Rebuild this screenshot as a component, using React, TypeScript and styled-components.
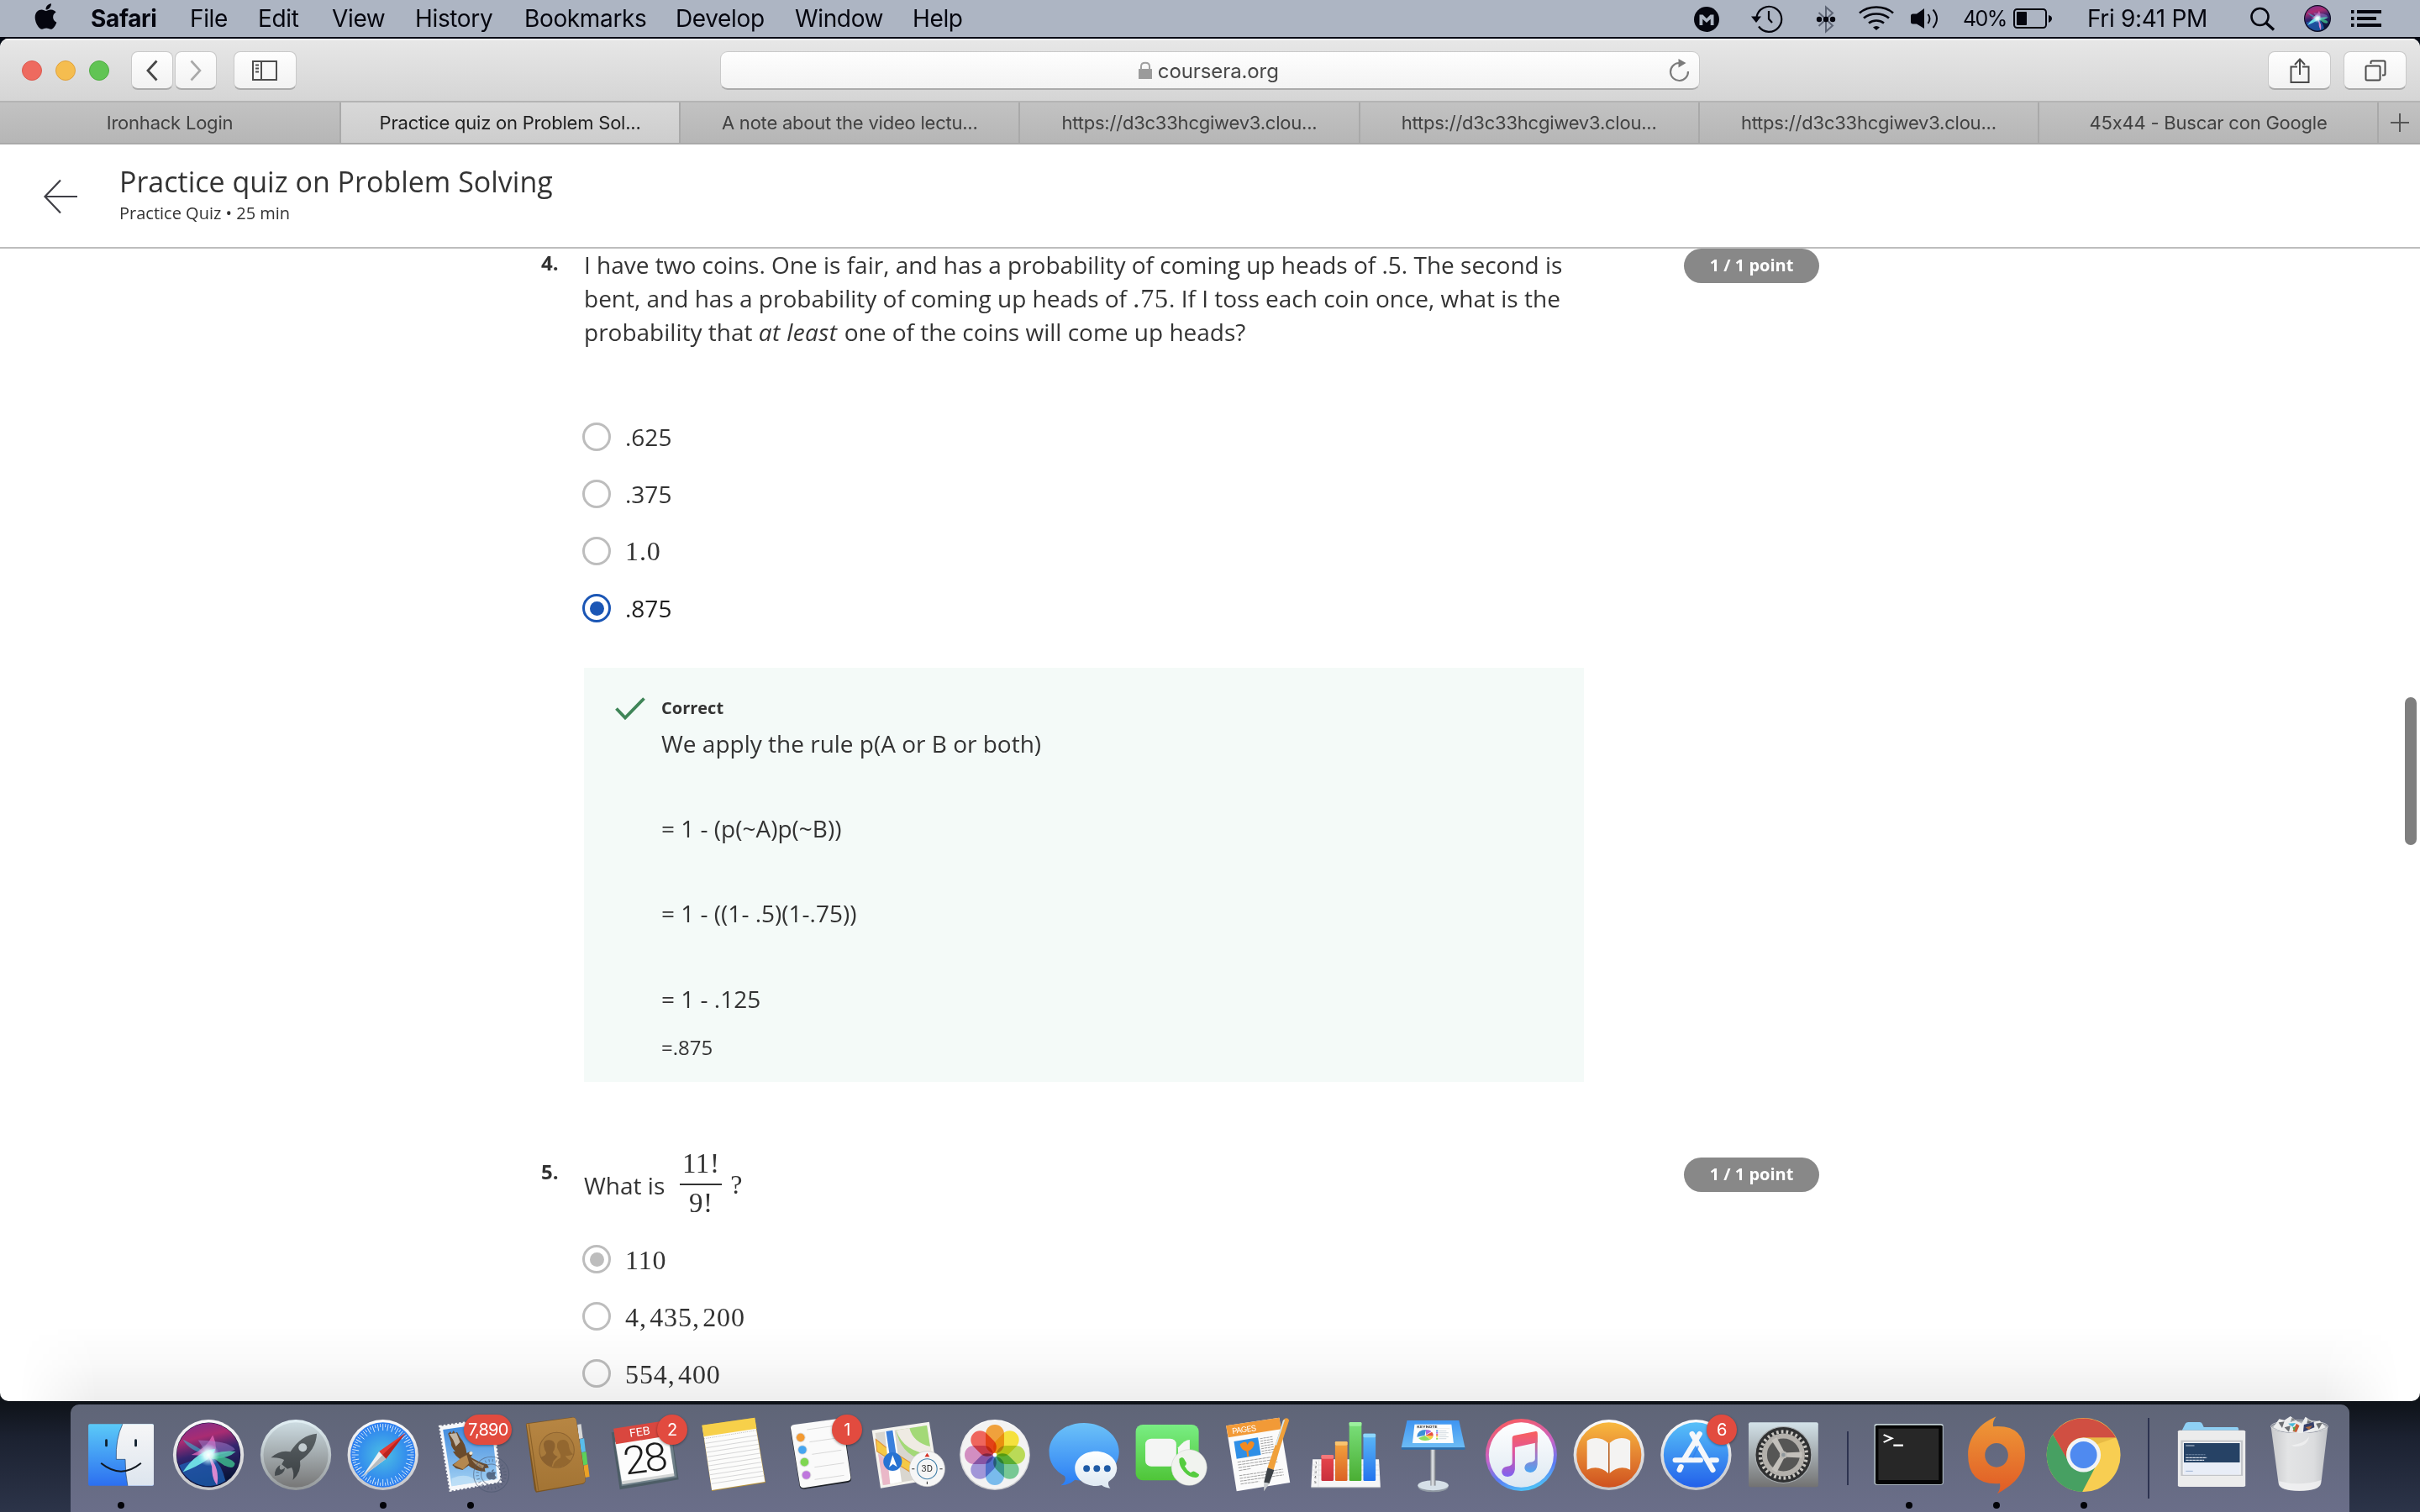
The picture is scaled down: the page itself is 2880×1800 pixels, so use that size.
import React from 'react';
import styled, { createGlobalStyle } from 'styled-components';
import { FaApple } from 'react-icons/fa';

const UI = `Inter, "Liberation Sans", sans-serif`;
const BODY = `"Open Sans", "Noto Sans", sans-serif`;
const MATH = `"Liberation Serif", serif`;

const Global = createGlobalStyle`
  * { box-sizing: border-box; }
  html, body { margin: 0; padding: 0; }
  body { width: 2880px; height: 1800px; overflow: hidden; background: #0b0f16; }
  svg { display: block; overflow: visible; }
`;

const Desktop = styled.div`
  display: flex;
  flex-direction: column;
  width: 2880px;
  height: 1800px;
  overflow: hidden;
  background: linear-gradient(to bottom, #030914 0, #030914 60px, #0e1218 1668px, #1b2130 1710px, #2c3449 1800px);
`;

/* ---------- menu bar ---------- */

const MenuBar = styled.header`
  display: flex;
  height: 44px;
  flex: none;
  margin-bottom: 2px;
  background: #adb5c3;
  color: #05060f;
  font: 400 28px/44px ${UI};
  letter-spacing: -0.35px;
  white-space: nowrap;
`;

const AppleMark = styled.div`
  width: 108px;
  padding: 2px 0 0 41px;
`;

const Menus = styled.nav`
  display: grid;
  grid-template-columns: 118px 81px 88px 99px 130px 180px 142px 140px 80px;
  width: 1908px;
`;

const MenuItem = styled.span<{ $strong?: boolean }>`
  font-weight: ${(p) => (p.$strong ? 700 : 400)};
`;

const Status = styled.div`
  display: grid;
  grid-template-columns: 68px 78px 50px 62px 62px 60px 88px 194px 64px 55px 40px;
  height: 44px;
`;

const Percent = styled.span`
  font-size: 25px;
  letter-spacing: -1.6px;
`;

/* ---------- browser chrome ---------- */

const Window = styled.section`
  position: relative;
  display: flex;
  flex-direction: column;
  flex: none;
  height: 1622px;
  border-radius: 10px;
  overflow: hidden;
  background: #fff;
`;

const Toolbar = styled.div`
  display: flex;
  flex: none;
  height: 74px;
  padding: 15px 16px 0 26px;
  background: linear-gradient(#e7e7e7, #d5d5d5);
  box-shadow: inset 0 2px 0 #f5f5f5;
`;

const Lights = styled.div`
  display: flex;
  gap: 16px;
  width: 130px;
  padding-top: 11px;
`;

const Light = styled.i<{ $fill: string; $edge: string }>`
  width: 24px;
  height: 24px;
  border-radius: 50%;
  background: ${(p) => p.$fill};
  border: 1px solid ${(p) => p.$edge};
`;

const ToolButton = styled.button<{ $w: number; $gap?: number }>`
  display: flex;
  align-items: center;
  justify-content: center;
  width: ${(p) => p.$w}px;
  height: 46px;
  margin: 0 ${(p) => p.$gap ?? 0}px 0 0;
  padding: 0;
  border: 1px solid #c9c9c9;
  border-bottom: 2px solid #acacac;
  border-radius: 8px;
  background: linear-gradient(#fefefe, #f2f2f2);
`;

const Address = styled.div`
  display: flex;
  align-items: center;
  width: 1167px;
  height: 46px;
  margin: 0 676px 0 504px;
  border: 1px solid #c9c9c9;
  border-bottom: 2px solid #acacac;
  border-radius: 9px;
  background: linear-gradient(#fefefe, #f3f3f3);
  color: #484848;
  font: 400 24px/40px ${UI};
`;

const Lock = styled.span`
  margin: 0 7px 0 497px;
`;

const Host = styled.span`
  width: 609px;
  padding-top: 3px;
  letter-spacing: -0.1px;
`;

const Tabs = styled.div`
  display: flex;
  flex: none;
  height: 52px;
  border-top: 2px solid #b4b4b4;
  border-bottom: 2px solid #a9a9a9;
  background: linear-gradient(#c2c2c2, #b6b6b6);
`;

const Tab = styled.div<{ $active?: boolean }>`
  flex: none;
  width: 404.2px;
  &:first-child {
    width: 406px;
  }
  border-right: 2px solid #a9a9a9;
  background: ${(p) => (p.$active ? 'linear-gradient(#d8d8d8, #cdcdcd)' : 'none')};
  color: ${(p) => (p.$active ? '#1f1f1f' : '#414141')};
  font: 400 22px/48px ${UI};
  letter-spacing: -0.22px;
  text-align: center;
  white-space: nowrap;
`;

const NewTab = styled.div`
  display: flex;
  flex: 1;
  align-items: center;
  justify-content: center;
`;

/* ---------- page ---------- */

const PageHeader = styled.header`
  display: flex;
  flex: none;
  height: 124px;
  padding-left: 52px;
  border-bottom: 2px solid #bdbdbd;
  background: #fff;
  color: #333;
  font-family: ${BODY};
`;

const BackArrow = styled.div`
  width: 90px;
  padding-top: 42px;
`;

const Heading = styled.div`
  padding-top: 22px;
`;

const Title = styled.h1`
  margin: 0;
  font-size: 34px;
  font-weight: 400;
  line-height: 44px;
`;

const Subtitle = styled.p`
  margin: 2px 0 0;
  font-size: 20px;
  line-height: 28px;
`;

const Page = styled.main`
  flex: 1;
  min-height: 0;
  overflow: hidden;
  padding-left: 644px;
  color: #333;
  font: 400 28px/40px ${BODY};
`;

const Question = styled.section`
  display: grid;
  grid-template-columns: 51px 1190px 161px;
  column-gap: 0;
  margin: -1px 0 90px;
`;

const Number = styled.div`
  font-size: 24px;
  font-weight: 700;
  line-height: 36px;
`;

const Points = styled.div`
  width: 161px;
  height: 41px;
  margin: 1px 0 0 119px;
  border-radius: 21px;
  background: #888;
  color: #fff;
  font-size: 20px;
  font-weight: 700;
  line-height: 40px;
  text-align: center;
`;

const Prompt = styled.p`
  margin: 0 -10px 88px 0;
  white-space: nowrap;
`;

const Emphasis = styled.em`
  letter-spacing: 0.4px;
  margin-right: 1px;
`;

const Inline = styled.span`
  font: 400 32px/36px ${MATH};
  letter-spacing: 0.9px;
  word-spacing: -5.5px;
`;

const FractionPrompt = styled.div`
  display: flex;
  align-items: flex-start;
  height: 105px;
  padding-top: 14px;
`;

const Fraction = styled.span`
  display: flex;
  flex-direction: column;
  width: 50px;
  margin: -21px 10px 0 18px;
  font: 400 33px/30px ${MATH};
  letter-spacing: 0.6px;
  text-align: center;
`;

const FractionRule = styled.i`
  height: 2px;
  margin: 9px 0 6px;
  background: #333;
`;

const Options = styled.div`
  display: flex;
  flex-direction: column;
  gap: 34px;
  margin-left: -2px;
`;

const Option = styled.label<{ $dark?: boolean }>`
  display: flex;
  align-items: center;
  gap: 17px;
  height: 34px;
  line-height: 34px;
  color: ${(p) => (p.$dark ? '#1f1f1f' : '#333')};
`;

const OptionMath = styled(Inline)`
  line-height: 35px;
  padding-top: 2px;
`;

const Radio = styled.span<{ $color: string; $on?: boolean }>`
  display: flex;
  flex: none;
  align-items: center;
  justify-content: center;
  width: 34px;
  height: 34px;
  border: 3.5px solid ${(p) => p.$color};
  border-radius: 50%;
  &::after {
    content: '';
    width: 17px;
    height: 17px;
    border-radius: 50%;
    background: ${(p) => (p.$on ? p.$color : 'transparent')};
  }
`;

const Feedback = styled.div`
  display: flex;
  height: 493px;
  margin-top: 54px;
  padding: 34px 0 0 37px;
  background: #f4faf8;
`;

const Check = styled.div`
  width: 55px;
  padding-top: 1px;
`;

const Verdict = styled.div`
  margin-bottom: 8px;
  font-size: 20px;
  font-weight: 700;
  line-height: 28px;
`;

const Step = styled.div<{ $last?: boolean }>`
  margin-bottom: ${(p) => (p.$last ? 20 : 61.2)}px;
  line-height: 40px;
`;

const Result = styled.div`
  font-size: 24px;
  line-height: 36px;
`;

const Scrollbar = styled.div`
  position: absolute;
  top: 784px;
  right: 4px;
  width: 14px;
  height: 176px;
  border-radius: 7px;
  background: #7f7f7f;
`;

const DockShade = styled.div`
  position: absolute;
  left: 0;
  right: 0;
  bottom: 0;
  height: 90px;
  background: linear-gradient(to bottom, rgba(0, 0, 0, 0), rgba(0, 0, 0, 0.025) 50%, rgba(0, 0, 0, 0.067));
  mask-image: linear-gradient(to right, transparent 0.8%, #000 4%, #000 96%, transparent 99.2%);
`;

/* ---------- dock ---------- */

const Dock = styled.footer`
  display: flex;
  flex: none;
  width: 2712px;
  height: 128px;
  margin: 4px 0 0 84px;
  padding-left: 8px;
  border-radius: 10px 10px 0 0;
  background: linear-gradient(#5f6577, #6a6e89);
`;

const DockItem = styled.div<{ $running?: boolean }>`
  position: relative;
  flex: none;
  width: 104.1px;
  height: 128px;
  &::after {
    content: '';
    display: ${(p) => (p.$running ? 'block' : 'none')};
    position: absolute;
    left: 48px;
    top: 116px;
    width: 8px;
    height: 8px;
    border-radius: 50%;
    background: #020308;
  }
`;

const Badge = styled.span`
  position: absolute;
  top: 12px;
  right: 3px;
  min-width: 36px;
  height: 36px;
  padding: 0 5px;
  border-radius: 18px;
  background: #e24b3f;
  box-shadow: 0 1px 3px rgba(0, 0, 0, 0.4);
  color: #fff;
  font: 400 20px/37px ${UI};
  letter-spacing: -0.8px;
  text-align: center;
`;

const Divider = styled.i<{ $w: number; $top: number; $h: number; $x: number }>`
  flex: none;
  width: ${(p) => p.$w}px;
  height: ${(p) => p.$h}px;
  margin-top: ${(p) => p.$top}px;
  background: linear-gradient(#2d3350, #2d3350) ${(p) => p.$x}px 0 / 2px 100% no-repeat;
`;

/* ---------- shared drawings ---------- */

const SiriOrb = () => (
  <g>
    <circle r="37.5" fill="#14133a" />
    <circle r="37" fill="url(#siriTop)" />
    <path d="M-34 12 A36 36 0 0 0 20 30 Q14 6 0 0Z" fill="#1f62b8" opacity=".75" />
    <path d="M-30 -18 Q-10 -8 0 0 Q-22 -4 -30 -18Z" fill="#31c3d8" opacity=".55" />
    <path d="M5 -23 Q12 -8 6 2 L-20 0 Q-2 -8 5 -23Z" fill="#f06cc0" opacity=".7" />
    <path d="M-12 -17 Q26 -16 31 -6 Q18 0 0 2Z" fill="#9f7fd0" opacity=".5" />
    <path d="M-30 20 Q-14 -4 8 -7 Q6 6 -30 20Z" fill="#7af4ee" opacity=".85" />
    <path d="M0 0 Q18 -6 32 -4 Q24 4 4 5Z" fill="#5ad6b8" opacity=".8" />
    <path d="M0 0 Q26 2 31 10 Q30 18 18 12Z" fill="#3fc28f" opacity=".8" />
    <path d="M0 0 Q14 16 10 35 Q4 28 4 14Z" fill="#f08fd6" opacity=".9" />
    <circle r="13" fill="url(#siriGlow)" />
  </g>
);

const Definitions = styled.svg`
  position: absolute;
`;

const SharedDefs = () => (
  <Definitions width="0" height="0">
    <defs>
      <linearGradient id="siriTop" x1="0" y1="0" x2=".25" y2="1">
        <stop offset="0" stopColor="#7a2f8f" />
        <stop offset=".3" stopColor="#a92c72" />
        <stop offset=".55" stopColor="#33256e" />
        <stop offset="1" stopColor="#0a1438" />
      </linearGradient>
      <radialGradient id="siriGlow">
        <stop offset="0" stopColor="#fff" />
        <stop offset=".4" stopColor="#e8ffff" stopOpacity=".85" />
        <stop offset="1" stopColor="#b0f0ff" stopOpacity="0" />
      </radialGradient>
      <linearGradient id="silver" x1="0" y1="0" x2="0" y2="1">
        <stop offset="0" stopColor="#fbfbfc" />
        <stop offset="1" stopColor="#c4c5c8" />
      </linearGradient>
      <linearGradient id="finderBlue" x1="0" y1="0" x2="0" y2="1">
        <stop offset="0" stopColor="#5bcaf8" />
        <stop offset="1" stopColor="#2c6ff0" />
      </linearGradient>
      <linearGradient id="finderWhite" x1="0" y1="0" x2="0" y2="1">
        <stop offset="0" stopColor="#f6f6f7" />
        <stop offset="1" stopColor="#dde5ee" />
      </linearGradient>
      <linearGradient id="launch" x1="0" y1="0" x2="0" y2="1">
        <stop offset="0" stopColor="#ccdbe1" />
        <stop offset="1" stopColor="#777777" />
      </linearGradient>
      <linearGradient id="launchRim" x1="0" y1="0" x2="0" y2="1">
        <stop offset="0" stopColor="#e3f1f6" />
        <stop offset="1" stopColor="#94989a" />
      </linearGradient>
      <linearGradient id="rocket" x1="0" y1="0" x2="0" y2="1">
        <stop offset="0" stopColor="#5b6266" />
        <stop offset="1" stopColor="#3a3f42" />
      </linearGradient>
      <radialGradient id="safari">
        <stop offset="0" stopColor="#4cc0e4" />
        <stop offset="1" stopColor="#2b7cf0" />
      </radialGradient>
      <linearGradient id="sky" x1="0" y1="0" x2="0" y2="1">
        <stop offset="0" stopColor="#3a86dc" />
        <stop offset="1" stopColor="#a5d3f4" />
      </linearGradient>
      <linearGradient id="leather" x1="0" y1="0" x2="0" y2="1">
        <stop offset="0" stopColor="#b78643" />
        <stop offset="1" stopColor="#a37434" />
      </linearGradient>
      <linearGradient id="bubble" x1="0" y1="0" x2="0" y2="1">
        <stop offset="0" stopColor="#6cc2f8" />
        <stop offset="1" stopColor="#2b7df4" />
      </linearGradient>
      <linearGradient id="paper" x1="0" y1="0" x2="0" y2="1">
        <stop offset="0" stopColor="#ffffff" />
        <stop offset="1" stopColor="#dde8f2" />
      </linearGradient>
      <linearGradient id="facetime" x1="0" y1="0" x2="0" y2="1">
        <stop offset="0" stopColor="#79ee83" />
        <stop offset="1" stopColor="#4fc538" />
      </linearGradient>
      <linearGradient id="keynote" x1="0" y1="0" x2="0" y2="1">
        <stop offset="0" stopColor="#3f95f2" />
        <stop offset="1" stopColor="#6cbcf5" />
      </linearGradient>
      <linearGradient id="pole" x1="0" y1="0" x2="1" y2="0">
        <stop offset="0" stopColor="#8c9096" />
        <stop offset=".45" stopColor="#e8ebee" />
        <stop offset="1" stopColor="#777b82" />
      </linearGradient>
      <linearGradient id="note" gradientUnits="userSpaceOnUse" x1="440" y1="132" x2="440" y2="296">
        <stop offset="0" stopColor="#f9605c" />
        <stop offset=".45" stopColor="#e0559c" />
        <stop offset="1" stopColor="#7a62f4" />
      </linearGradient>
      <linearGradient id="noteRight" gradientUnits="userSpaceOnUse" x1="490" y1="140" x2="480" y2="280">
        <stop offset="0" stopColor="#f9605c" />
        <stop offset=".5" stopColor="#a575c4" />
        <stop offset="1" stopColor="#4aa6f4" />
      </linearGradient>
      <linearGradient id="itunesRim" x1=".3" y1="0" x2=".6" y2="1">
        <stop offset="0" stopColor="#fa5b5e" />
        <stop offset=".45" stopColor="#c863c8" />
        <stop offset=".75" stopColor="#5b7cf6" />
        <stop offset="1" stopColor="#4cc6f6" />
      </linearGradient>
      <linearGradient id="books" x1="0" y1="0" x2="0" y2="1">
        <stop offset="0" stopColor="#f8b93f" />
        <stop offset=".5" stopColor="#e58432" />
        <stop offset="1" stopColor="#cf521f" />
      </linearGradient>
      <linearGradient id="store" x1="0" y1="0" x2="0" y2="1">
        <stop offset="0" stopColor="#57c0f8" />
        <stop offset="1" stopColor="#2361ea" />
      </linearGradient>
      <linearGradient id="prefs" x1="0" y1="0" x2="0" y2="1">
        <stop offset="0" stopColor="#d3e2e9" />
        <stop offset="1" stopColor="#727272" />
      </linearGradient>
      <linearGradient id="origin" x1="0" y1="0" x2="0" y2="1">
        <stop offset="0" stopColor="#ef9a38" />
        <stop offset="1" stopColor="#e05b25" />
      </linearGradient>
      <linearGradient id="bin" x1="0" y1="0" x2="1" y2="0">
        <stop offset="0" stopColor="#c9cacc" />
        <stop offset=".3" stopColor="#e3e4e5" />
        <stop offset=".75" stopColor="#dcdddf" />
        <stop offset="1" stopColor="#c0c2c6" />
      </linearGradient>
    </defs>
  </Definitions>
);

/* ---------- dock icons ---------- */

type IconDef = {
  name: string;
  cx: number;
  scale?: number;
  running?: boolean;
  badge?: string;
  art: React.ReactNode;
};

const range = (n: number) => Array.from({ length: n }, (_, i) => i);

const PetalGroup = styled.g`
  isolation: isolate;
  rect {
    mix-blend-mode: multiply;
  }
`;

const petals = ['#f09a2c', '#f5e02e', '#b5d84a', '#6cc48c', '#6fb6ec', '#9a8ed6', '#cf86bd', '#ef5a50'];

const appIcons: IconDef[] = [
  {
    name: 'Finder', cx: 235, running: true,
    art: (
      <>
        <rect x="126" y="106" width="218" height="220" rx="5" fill="url(#finderBlue)" />
        <path d="M240 106H339q5 0 5 5V321q0 5-5 5H257Q249 285 249 232H219Q216 160 240 106Z" fill="url(#finderWhite)" />
        <path d="M240 106Q216 160 219 232H249Q249 285 257 326" fill="none" stroke="#1c3f6e" strokeWidth="2" />
        <rect x="182" y="160" width="8" height="27" rx="4" fill="#10202e" />
        <rect x="280" y="160" width="8" height="27" rx="4" fill="#10202e" />
        <path d="M170 247Q235 303 300 247" fill="none" stroke="#111820" strokeWidth="6" strokeLinecap="round" />
      </>
    ),
  },
  {
    name: 'Siri', cx: 527,
    art: (
      <>
        <ellipse cx="527" cy="216" rx="118" ry="126" fill="url(#silver)" />
        <g transform="translate(527 216) scale(2.85 3.08)"><SiriOrb /></g>
      </>
    ),
  },
  {
    name: 'Launchpad', cx: 818,
    art: (
      <>
        <ellipse cx="818" cy="216" rx="118" ry="126" fill="url(#launchRim)" />
        <ellipse cx="818" cy="216" rx="108" ry="116" fill="url(#launch)" />
        <path d="M888 140Q835 145 800 205Q765 196 735 226Q762 224 779 234L771 250L790 266L804 261Q814 280 808 306Q838 276 832 237Q886 198 888 140Z" fill="url(#rocket)" />
        <ellipse cx="841" cy="190" rx="14" ry="15" fill="#c3ccd0" />
        <path d="M748 291Q746 264 766 252Q760 268 770 269Q777 268 782 262Q780 288 748 291Z" fill="#454b4f" />
      </>
    ),
  },
  {
    name: 'Safari', cx: 1110, running: true,
    art: (
      <>
        <ellipse cx="1109" cy="216" rx="118" ry="126" fill="url(#silver)" />
        <ellipse cx="1109" cy="216" rx="108" ry="116" fill="url(#safari)" />
        <g transform="translate(1109 216) scale(2.8 3)">
          {range(72).map((i) => (
            <line key={i} x1="0" x2="0" y1="-37" y2={i % 2 ? -33 : -29} transform={`rotate(${i * 5})`} stroke="#d9ecfb" strokeWidth=".9" />
          ))}
        </g>
        <path d="M1184 138L1096 204L1119 230Z" fill="#e23a34" />
        <path d="M1184 138L1107 217L1119 230Z" fill="#b9231f" />
        <path d="M1040 294L1096 204L1119 230Z" fill="#eef0f1" />
        <path d="M1040 294L1107 217L1119 230Z" fill="#b6bbbf" />
      </>
    ),
  },
  {
    name: 'Mail', cx: 1401, running: true, badge: '7,890',
    art: (
      <>
        <path d="M1298 114L1474 86L1501 312L1333 344Z" fill="#f7f8fa" stroke="#f7f8fa" strokeWidth="7" strokeDasharray="7 6" />
        <path d="M1309 126L1470 101L1490 302L1338 328Z" fill="url(#sky)" />
        <path d="M1338 300Q1380 280 1410 300T1488 285L1490 302L1338 328Z" fill="#cfe7f8" opacity=".6" />
        <path d="M1326 140L1334 132L1338 140L1344 129L1350 139L1356 134L1366 154Q1384 176 1388 210L1400 203L1408 212L1402 224Q1424 240 1456 250L1462 262L1448 264L1450 276Q1412 272 1394 254L1374 270L1352 264L1340 252L1366 232Q1352 222 1342 204L1350 204Q1334 186 1336 172Z" fill="#6b4b2c" />
        <path d="M1330 142L1354 138L1366 170L1352 186Q1344 160 1330 142Z" fill="#d9d2c6" opacity=".8" />
        <path d="M1404 232Q1424 246 1446 254L1442 264Q1418 258 1404 232Z" fill="#c9b79a" opacity=".6" />
        <path d="M1368 228L1388 216L1396 246L1376 268L1344 252Z" fill="#b48850" />
        <ellipse cx="1402" cy="210" rx="6" ry="6" fill="#f0e6d0" />
        <g fill="none" stroke="#4b566e" opacity=".58">
          <ellipse cx="1470" cy="286" rx="59" ry="63" strokeWidth="3" />
          <ellipse cx="1470" cy="286" rx="34" ry="37" strokeWidth="3" />
          <ellipse cx="1470" cy="286" rx="46" ry="50" strokeWidth="10" strokeDasharray="3 9" />
        </g>
        <g transform="translate(1453 265) scale(.09 .082)" fill="#3f4b63" opacity=".75">
          <path d="M318.700 268.700c-.2-36.700 16.400-64.400 50-84.800-18.800-26.900-47.200-41.700-84.700-44.600-35.500-2.800-74.300 20.700-88.500 20.700-15 0-49.400-19.700-76.400-19.700C63.300 141.200 4 184.800 4 273.500q0 39.300 14.400 81.200c12.800 36.700 59 126.700 107.200 125.200 25.200-.6 43-17.900 75.800-17.900 31.800 0 48.300 17.900 76.400 17.900 48.600-.7 90.400-82.500 102.600-119.300-65.200-30.700-61.700-90-61.700-91.900zm-56.600-164.200c27.300-32.400 24.800-61.900 24-72.500-24.100 1.400-52 16.400-67.900 34.900-17.500 19.800-27.800 44.300-25.600 71.900 26.100 2 49.900-11.400 69.500-34.300z" />
        </g>
      </>
    ),
  },
  {
    name: 'Contacts', cx: 181,
    art: (
      <>
        <path d="M246 108L258 106L264 156L250 160Z" fill="#d6d8d8" />
        <path d="M254 160L268 157L273 204L256 208Z" fill="#59bdea" />
        <path d="M260 208L275 205L280 250L262 254Z" fill="#5cd15a" />
        <path d="M266 254L281 250L286 294L268 298Z" fill="#eba226" />
        <path d="M74 108Q74 104 80 103L228 82Q240 80 242 94L273 304Q274 316 264 320L108 350Q103 344 102 336Z" fill="#7a5422" />
        <path d="M76 106L228 83Q240 81 242 94L272 304Q273 315 262 318L110 346Z" fill="url(#leather)" />
        <path d="M84 106L116 344" stroke="#8a6028" strokeWidth="3" fill="none" />
        <ellipse cx="177" cy="199" rx="58" ry="63" fill="#a97b3c" stroke="#8d6330" strokeWidth="3" />
        <path d="M134 186Q130 164 150 163Q172 164 171 186Q170 198 164 206Q166 216 180 222L166 238L160 258Q134 250 122 224Q142 220 142 208Q136 200 134 186Z" fill="#8b612f" />
        <path d="M178 190Q174 164 198 162Q216 162 218 188Q220 204 232 214Q216 222 206 218Q208 228 224 236Q206 262 164 260Q166 238 190 226Q192 216 186 208Z" fill="#93672f" />
      </>
    ),
  },
  {
    name: 'Calendar', cx: 472, badge: '2',
    art: (
      <>
        <path d="M356 136L552 108L580 304L384 340Z" fill="#4d5d66" />
        <path d="M366 140L552 112L574 296L390 328Z" fill="#6f8089" />
        <path d="M368 170L546 146L566 292L392 322Z" fill="#d4d6d6" />
        <path d="M371 174L544 148L564 282L391 310Z" fill="#fcfcfc" />
        <path d="M363 122L536 94L545 148L371 178Z" fill="#d9473f" />
        <text transform="translate(418 152) rotate(-8)" fill="#fff" fontFamily="Roboto, sans-serif" fontSize="40">FEB</text>
        <text transform="translate(403 287) rotate(-8)" fill="#1c1c1c" fontFamily="Roboto, sans-serif" fontWeight="300" fontSize="140" letterSpacing="-8">28</text>
      </>
    ),
  },
  {
    name: 'Notes', cx: 763.5,
    art: (
      <>
        <path d="M658 110L834 83L870 315L691 345Z" fill="#b5913a" />
        <path d="M659 112L833 86L868 312L691 342Z" fill="#fcfcfb" />
        <path d="M658 110L834 83L840 122L664 151Z" fill="#f7d04a" />
        <path d="M666 158L841 128" stroke="#8d8d8d" strokeWidth="2" strokeDasharray="2 3" />
        {range(10).map((i) => (
          <path key={i} d={`M${669 + i * 2.3} ${175 + i * 16}L${842 + i * 2.6} ${146 + i * 16}`} stroke="#c4c4c6" strokeWidth="2" />
        ))}
      </>
    ),
  },
  {
    name: 'Reminders', cx: 1055, badge: '1',
    art: (
      <>
        <path d="M953 124Q952 110 966 110L1112 88Q1126 86 1130 98L1156 300Q1156 312 1146 314L998 338Q986 338 984 328Z" fill="#1c2026" />
        <path d="M954 120Q954 110 966 108L1112 87Q1124 86 1127 98L1154 296Q1154 307 1144 309L998 334Q988 335 985 325Z" fill="#fafafa" />
        {[['#f39a33', 987, 154], ['#46a5f0', 993, 198], ['#7fd651', 1000, 242], ['#bf77dd', 1006, 288]].map(([c, x, y], i) => (
          <g key={i}>
            <ellipse cx={x} cy={y} rx="16.500" ry="17.500" fill="#dcdcdc" />
            <ellipse cx={x} cy={y} rx="13.500" ry="14.500" fill={c as string} />
            <path d={`M${1008 + i * 8.500} ${(y as number) - 28}l98 -15`} stroke="#c9c9c9" strokeWidth="2" />
          </g>
        ))}
        <path d="M1034 304l98 -15" stroke="#c9c9c9" strokeWidth="2" />
      </>
    ),
  },
  {
    name: 'Maps', cx: 1346.5,
    art: (
      <>
        <path d="M1225 128L1416 98L1446 300L1254 335Z" fill="#f4f3ee" />
        <path d="M1236 138L1408 111L1434 294L1262 324Z" fill="#d9d6cf" />
        <path d="M1306 128L1408 111L1430 262L1390 232Q1320 210 1306 128Z" fill="#a3d977" />
        <path d="M1306 128L1350 120Q1362 172 1420 186L1424 214Q1330 206 1306 128Z" fill="#efebe3" />
        <path d="M1238 160L1268 186L1380 262L1360 282L1242 204Z" fill="#f5c945" stroke="#e0943c" strokeWidth="3" />
        <path d="M1246 212L1276 236L1286 320L1262 324Z" fill="#eab8c8" />
        <path d="M1268 132L1300 127L1324 312L1286 320Z" fill="#fff" />
        <path d="M1272 132L1294 128L1306 214L1284 218Z" fill="#3a7fdc" />
        <ellipse cx="1294" cy="240" rx="31" ry="33" fill="#2873d3" />
        <path d="M1294 217L1309 259L1295 249L1282 260Z" fill="#fff" />
        <ellipse cx="1409" cy="266" rx="59" ry="63" fill="#f6f6f6" stroke="#c8c8c8" strokeWidth="2" />
        <ellipse cx="1409" cy="266" rx="33" ry="36" fill="none" stroke="#3f7ea8" strokeWidth="3" />
        <path d="M1409 209L1417 223H1401Z" fill="#d63022" />
        <path d="M1409 311v10M1358 266h9M1451 266h9" stroke="#333" strokeWidth="3" />
        <text x="1409" y="277" textAnchor="middle" fill="#333" fontFamily="Roboto, sans-serif" fontSize="31">3D</text>
      </>
    ),
  },
  {
    name: 'Photos', cx: 154,
    art: (
      <>
        <ellipse cx="151" cy="216" rx="117" ry="126" fill="url(#silver)" />
        <ellipse cx="151" cy="216" rx="113" ry="122" fill="#f3f3f3" />
        <PetalGroup transform="translate(151 216) scale(2.8 3)">
          {petals.map((c, i) => (
            <rect key={c} x="-11" y="-36" width="22" height="34" rx="11" fill={c} fillOpacity=".92" transform={`rotate(${i * 45})`} />
          ))}
          <circle r="2.200" fill="#fff" />
        </PetalGroup>
      </>
    ),
  },
  {
    name: 'Messages', cx: 445.5,
    art: (
      <>
        <path d="M448 102C513 102 565 148 565 205S513 308 448 308Q432 308 418 305Q400 323 371 325Q392 310 384 292Q332 262 332 205C332 148 383 102 448 102Z" fill="url(#bubble)" />
        <path d="M488 203C527 203 558 230 558 264Q558 292 530 312Q527 325 536 335Q518 334 507 324Q497 327 488 327C449 327 418 299 418 264S449 203 488 203Z" fill="url(#paper)" />
        <ellipse cx="457" cy="265" rx="11" ry="12" fill="#1e5aa6" />
        <ellipse cx="491" cy="265" rx="11" ry="12" fill="#1e5aa6" />
        <ellipse cx="526" cy="265" rx="11" ry="12" fill="#1e5aa6" />
      </>
    ),
  },
  {
    name: 'FaceTime', cx: 737,
    art: (
      <>
        <rect x="621" y="108" width="210" height="199" rx="24" fill="url(#facetime)" />
        <path d="M762 190Q784 162 801 162V250L762 230Z" fill="#f4f5f4" />
        <rect x="653" y="158" width="103" height="99" rx="20" fill="#f4f5f4" />
        <ellipse cx="799" cy="261" rx="59" ry="64" fill="#f1f3ef" stroke="#c9cec6" strokeWidth="1.500" />
        <path d="M766 230Q776 220 782 230L790 245Q790 252 784 256Q790 270 804 280Q812 272 818 276L832 286Q832 296 822 297Q800 298 782 276Q764 254 766 230Z" fill="#55cc3f" />
      </>
    ),
  },
  {
    name: 'Pages', cx: 1028,
    art: (
      <>
        <path d="M922 112L1099 83L1135 315L957 346Z" fill="#fbfbfb" />
        <path d="M922 112L1099 83L1106 124L929 154Z" fill="#f29a37" />
        <text transform="translate(943 141) rotate(-8)" fill="#fff" fontFamily="Inter, sans-serif" fontSize="28" letterSpacing="-2">PAGES</text>
        <path d="M948 168L1028 154L1038 216L957 230Z" fill="#2f8fe6" />
        <path d="M968 178Q990 160 992 180Q1004 158 1016 174Q1014 194 996 202L998 222L992 222L990 203Q970 198 968 178Z" fill="#f28a22" />
        {range(7).map((i) => (
          <path key={i} d={`M${1035 + i} ${158 + i * 9}l42 -7`} stroke="#a2a2a2" strokeWidth="3" strokeDasharray="9 2" />
        ))}
        {range(4).map((i) => (
          <path key={i} d={`M${960 + i * 1.500} ${242 + i * 10}l${130 - (i === 3 ? 90 : 0)} ${i === 3 ? -7 : -21}`} stroke="#a2a2a2" strokeWidth="3" strokeDasharray="12 2" />
        ))}
        {range(4).map((i) => (
          <path key={i} d={`M${966 + i * 1.500} ${290 + i * 10}l${145 - (i === 3 ? 84 : 0)} ${i === 3 ? -9 : -23}`} stroke="#a2a2a2" strokeWidth="3" strokeDasharray="10 2" />
        ))}
        <path d="M1112 92Q1124 78 1132 92L1102 190L1080 270L1060 262L1086 180Z" fill="#f0a03a" />
        <path d="M1112 92L1118 90L1090 182L1086 180Z" fill="#cfe6f4" />
        <path d="M1060 262L1082 270L1066 318L1048 314Z" fill="#3c4146" />
        <path d="M1048 314L1066 318L1048 346Z" fill="#c9cdd0" />
      </>
    ),
  },
  {
    name: 'Numbers', cx: 1320,
    art: (
      <>
        <path d="M1211 232H1432L1437 330H1206Z" fill="#f6f6f7" />
        <path d="M1206 330H1437V334H1206Z" fill="#b9bbc2" />
        <path d="M1232 232L1230 330M1210 252H1433M1209 270H1434M1208 288H1435" stroke="#d5d6d9" strokeWidth="1.500" />
        {['1', '2', '3', '4', '5'].map((t, i) => (
          <text key={t} x={1222 - i * 0.5} y={248 + i * 17.500} textAnchor="middle" fill="#333" fontFamily="Inter, sans-serif" fontSize="12">{t}</text>
        ))}
        {([['#c9303c', '#e8474d', '#f4787a', 1240, 216], ['#dc6224', '#f2a53f', '#f8c470', 1286, 168], ['#4aae33', '#7be07c', '#9cf09e', 1333, 99], ['#2373ee', '#5dbaf6', '#8ed6fa', 1380, 140]] as [string, string, string, number, number][]).map(([a, b, c, x, y], i) => (
          <g key={i}>
            <linearGradient id={`bar${i}`} x1="0" y1="0" x2="0" y2="1"><stop offset="0" stopColor={b} /><stop offset="1" stopColor={a} /></linearGradient>
            <rect x={x} y={y} width="41" height={309 - y} rx="4" fill={`url(#bar${i})`} />
            <rect x={x} y={y} width="41" height="14" rx="4" fill={c} />
          </g>
        ))}
      </>
    ),
  },
  {
    name: 'Keynote', cx: 155.5,
    art: (
      <>
        <ellipse cx="157" cy="329" rx="51" ry="20" fill="#8f98a3" />
        <ellipse cx="157" cy="325" rx="51" ry="18" fill="#d6e0e8" />
        <rect x="148" y="192" width="17" height="134" fill="url(#pole)" />
        <path d="M70 93H243L263 190H51Z" fill="url(#keynote)" />
        <path d="M51 190H263V197H52Z" fill="#2b6fae" />
        <path d="M95 107H218L225 174H88Z" fill="#fdfdfd" />
        <text x="103" y="119" fill="#333" fontFamily="Inter, sans-serif" fontWeight="700" fontSize="11" textLength="68" lengthAdjust="spacingAndGlyphs">KEYNOTE</text>
        <path d="M102 122H212" stroke="#ccc" strokeWidth="1" />
        <path d="M129 146L103 152Q104 126 133 126Z" fill="#3c8fd8" />
        <path d="M133 144V126Q146 126 151 133Z" fill="#b06ae0" />
        <path d="M131 147L153 134Q159 140 157 149Z" fill="#e8503f" />
        <path d="M131 147L157 149Q156 158 148 161Z" fill="#f6d53c" />
        <path d="M129 147L108 156Q116 166 132 165Q144 164 148 161Z" fill="#8edc62" />
        {['#3c8fd8', '#b06ae0', '#e8503f', '#f6d53c', '#8edc62'].map((c, i) => (
          <g key={c}>
            <rect x="167" y={128 + i * 7} width="6" height="5" fill={c} />
            <rect x="176" y={129 + i * 7} width={i % 2 ? 32 : 25} height="2.500" fill="#c9d3da" />
          </g>
        ))}
      </>
    ),
  },
  {
    name: 'iTunes', cx: 447,
    art: (
      <>
        <ellipse cx="448" cy="216" rx="119" ry="129" fill="url(#itunesRim)" />
        <ellipse cx="448" cy="216" rx="108" ry="116" fill="url(#paper)" />
        <path d="M418 155Q418 149 424 147L496 132Q502 131 502 137V172L427 189V268Q424 293 403 294Q383 293 383 276Q384 260 401 257Q418 256 418 244Z" fill="url(#note)" />
        <path d="M502 137V250Q500 278 478 279Q459 277 459 262Q460 246 476 242Q494 241 494 230V174Z" fill="url(#noteRight)" />
      </>
    ),
  },
  {
    name: 'Books', cx: 738,
    art: (
      <>
        <ellipse cx="740" cy="216" rx="118" ry="126" fill="url(#silver)" />
        <ellipse cx="740" cy="216" rx="108" ry="116" fill="url(#books)" />
        <path d="M738 174Q720 156 698 156Q680 156 667 166V269Q706 250 738 282Z" fill="#f4f3f2" />
        <path d="M742 174Q760 156 782 156Q799 156 811 166V269Q774 250 742 282Z" fill="#f4f3f2" />
        <path d="M740 174V282" stroke="#a85420" strokeWidth="3" />
      </>
    ),
  },
  {
    name: 'App Store', cx: 1030, badge: '6',
    art: (
      <>
        <ellipse cx="1031" cy="216" rx="118" ry="126" fill="url(#silver)" />
        <ellipse cx="1031" cy="216" rx="108" ry="116" fill="url(#store)" />
        <g stroke="#f5f7fa" strokeWidth="18" strokeLinecap="round" fill="none">
          <path d="M1018 141L1087 270" />
          <path d="M1043 141L990 234" />
          <path d="M962 235H1046M1082 235H1099" />
          <path d="M981 258L976 270" />
        </g>
        <path d="M1039 184L1020 226" stroke="#2f7df0" strokeWidth="5" opacity=".7" />
      </>
    ),
  },
  {
    name: 'System Preferences', cx: 1321,
    art: (
      <>
        <rect x="1206" y="100" width="232" height="231" rx="6" fill="url(#prefs)" />
        <g transform="translate(1322 216) scale(2.8 3)">
          <circle r="33.500" fill="#303132" stroke="#a8adb0" strokeWidth="1.200" />
          <circle r="26.500" fill="none" stroke="#c9c7c2" strokeWidth="4" strokeDasharray="2.600 2.950" transform="scale(1.040)" />
          <circle r="22.500" fill="#565655" stroke="#b3b0ab" strokeWidth="6" />
          {[0, 120, 240].map((a) => (
            <path key={a} d="M0 -2.500L22 -3.500V3.500L0 2.500Z" fill="#c3c0bb" transform={`rotate(${a})`} />
          ))}
          <circle r="4.500" fill="#b8b6b2" />
          <circle r="2.300" fill="#8f979c" />
        </g>
      </>
    ),
  },
];

const utilityIcons: IconDef[] = [
  {
    name: 'Terminal', cx: 207, scale: 2.24, running: true,
    art: (
      <>
        <rect x="114" y="105" width="184" height="218" rx="7" fill="#c2d0d4" />
        <rect x="117" y="110" width="179" height="211" rx="5" fill="#050505" />
        <rect x="125" y="122" width="161" height="184" fill="#272727" />
        <path d="M139 144L161 157L139 171" fill="none" stroke="#fff" strokeWidth="6" />
        <path d="M165 182H191" stroke="#fff" strokeWidth="7" />
      </>
    ),
  },
  {
    name: 'Origin', cx: 440, scale: 2.24, running: true,
    art: (
      <path
        fillRule="evenodd"
        d="M439 79Q428 98 431 115Q516 106 516 216C516 290 484 322 442 355Q452 336 449 318Q364 326 364 216C364 150 396 104 439 79ZM440 174C423 174 409 193 409 217S423 260 440 260S471 241 471 217S457 174 440 174Z"
        fill="url(#origin)"
      />
    ),
  },
  {
    name: 'Chrome', cx: 673, scale: 2.24, running: true,
    art: (
      <g transform="translate(672 216) scale(2.240 3)">
        <circle r="44" fill="#f8ce52" />
        <path d="M-36.500 -24.500A44 44 0 0 1 38.500 -20.500H0A20 20 0 0 0 -18 9Z" fill="#d04f42" />
        <path d="M-36.500 -24.500A44 44 0 0 0 -1.500 44L14 14.500Q0 26 -18 8Z" fill="#47a062" />
        <path d="M0 -20.500H38.500L14 -12Z" fill="#dba93a" opacity=".55" />
        <circle r="20.500" fill="#f1f3f6" />
        <circle r="16" fill="#4f8af0" />
      </g>
    ),
  },
];

const placeIcons: IconDef[] = [
  {
    name: 'Documents', cx: 1012, scale: 2.24,
    art: (
      <>
        <path d="M933 128L942 104Q944 99 950 99H980Q985 99 987 105L991 117H1080Q1084 117 1084 128Z" fill="#8fd0f5" />
        <rect x="922" y="128" width="180" height="202" rx="5" fill="#ececec" />
        <rect x="930" y="164" width="165" height="127" fill="#c3c5c9" />
        <rect x="935" y="170" width="155" height="117" fill="#f3f4f7" />
        <rect x="938" y="174" width="149" height="69" fill="#264265" />
        <rect x="938" y="244" width="149" height="42" fill="#e8edf7" />
        <path d="M943 183H966" stroke="#c3cfdd" strokeWidth="3" />
        <path d="M943 215H995" stroke="#6f86a3" strokeWidth="3" strokeDasharray="7 1" />
        <path d="M943 226H999M943 235H992" stroke="#d5dde8" strokeWidth="4" strokeDasharray="8 1" />
        <path d="M943 274H962" stroke="#9db2d2" strokeWidth="3" />
      </>
    ),
  },
  {
    name: 'Trash', cx: 1245, scale: 2.24,
    art: (
      <>
        <ellipse cx="1246" cy="116" rx="74" ry="20" fill="#b3b6bb" />
        <path d="M1176 118L1192 88L1206 92L1222 78L1240 96L1252 104L1262 80L1282 98L1300 94L1316 118Q1280 140 1246 138Q1200 138 1176 118Z" fill="#ecedee" />
        <path d="M1190 100L1206 96L1200 120ZM1226 84L1238 92L1222 98ZM1268 88L1280 100L1266 104ZM1290 104L1308 100L1298 124ZM1206 118L1222 112L1218 134Z" fill="#6c6f73" />
        <path d="M1216 104L1236 102L1228 116Z" fill="#49b8d8" />
        <path d="M1238 104L1246 112L1238 136L1228 132Z" fill="#c85a35" />
        <path d="M1258 108L1284 98L1286 118L1256 134Z" fill="#37406a" />
        <path d="M1262 118L1280 112L1272 126Z" fill="#b06a3c" />
        <path d="M1228 118L1236 114L1232 134Z" fill="#52a855" />
        <path d="M1170 114Q1180 138 1246 138T1322 114L1304 316Q1300 345 1246 345T1190 316Z" fill="url(#bin)" />
        <path d="M1224 182Q1260 176 1272 150Q1268 188 1232 186Z" fill="#fff" opacity=".45" />
        <path d="M1192 310Q1246 330 1304 306L1302 320Q1296 343 1246 343T1192 320Z" fill="#f4f4f5" opacity=".7" />
        <ellipse cx="1246" cy="114" rx="76" ry="22" fill="none" stroke="#f0f1f2" strokeWidth="2" opacity=".85" />
      </>
    ),
  },
];

const DockIcon = ({ icon }: { icon: IconDef }) => {
  const s = icon.scale ?? 2.8;
  return (
    <DockItem $running={icon.running} aria-label={icon.name}>
      <svg width="104.1" height="128" viewBox={`${icon.cx - 52.05 * s} 36 ${104.1 * s} 384`} preserveAspectRatio="none">
        {icon.art}
      </svg>
      {icon.badge && <Badge>{icon.badge}</Badge>}
    </DockItem>
  );
};

/* ---------- app ---------- */

const menus = ['File', 'Edit', 'View', 'History', 'Bookmarks', 'Develop', 'Window', 'Help'];

const tabs = [
  'Ironhack Login',
  'Practice quiz on Problem Sol...',
  'A note about the video lectu...',
  'https://d3c33hcgiwev3.clou...',
  'https://d3c33hcgiwev3.clou...',
  'https://d3c33hcgiwev3.clou...',
  '45x44 - Buscar con Google',
];

const GREY = '#bdbdbd';
const BLUE = '#1b56b5';

const AppleGlyph = styled(FaApple)`
  width: 27px;
  height: 35px;
`;

export default function App() {
  return (
    <Desktop>
      <Global />
      <SharedDefs />
      <MenuBar>
        <AppleMark>
          <AppleGlyph />
        </AppleMark>
        <Menus>
          <MenuItem $strong>Safari</MenuItem>
          {menus.map((m) => (
            <MenuItem key={m}>{m}</MenuItem>
          ))}
        </Menus>
        <Status>
          <svg width="30" height="44" viewBox="0 0 30 44">
            <circle cx="15" cy="23" r="15" fill="#05060f" />
            <path d="M6.500 30V17.500H10.500L15 22L19.500 17.500H23.500V30H19.700V22.800L15 27L10.300 22.800V30Z" fill="#adb5c3" />
          </svg>
          <svg width="38" height="44" viewBox="0 0 38 44">
            <path d="M6.500 20A15 15 0 1 1 9 31.500" fill="none" stroke="#05060f" strokeWidth="2.200" />
            <path d="M0 19.500H12L6 27Z" fill="#05060f" />
            <path d="M21 13V22.500L25 27" fill="none" stroke="#05060f" strokeWidth="2.200" />
          </svg>
          <svg width="22" height="44" viewBox="0 0 22 44">
            <path d="M2.500 15L19 30.500L11 37.500V8.500L19 15.500L2.500 31" fill="none" stroke="#5d6474" strokeWidth="2" />
            <circle cx="3" cy="23" r="3.200" fill="#05060f" />
            <circle cx="11" cy="23" r="3.200" fill="#05060f" />
            <circle cx="19" cy="23" r="3.200" fill="#05060f" />
          </svg>
          <svg width="42" height="44" viewBox="0 0 42 44">
            <g fill="none" stroke="#05060f" strokeWidth="2.700">
              <path d="M1 15.500Q9 8.500 21 8.500T41 15.500" />
              <path d="M6 21.500Q12 16.500 21 16.500T36 21.500" />
              <path d="M12 27.500Q16 24.500 21 24.500T30 27.500" />
            </g>
            <path d="M17 32.500Q21 29.500 25 32.500L21 36Z" fill="#05060f" />
          </svg>
          <svg width="34" height="44" viewBox="0 0 34 44">
            <path d="M0 19Q0 16.500 2.500 16.500H7L16 10V34L7 28.500H2.500Q0 28.500 0 26Z" fill="#05060f" />
            <path d="M20.500 17Q24.500 22 20.500 28M26.500 11.500Q35.500 22 26.500 33" fill="none" stroke="#05060f" strokeWidth="2" />
          </svg>
          <Percent>40%</Percent>
          <svg width="46" height="44" viewBox="0 0 46 44">
            <rect x="1" y="11" width="38" height="22" rx="3.500" fill="none" stroke="#05060f" strokeWidth="2" />
            <rect x="4" y="14" width="12" height="16" rx="1" fill="#05060f" />
            <path d="M42 18Q46 19 46 22T42 27Z" fill="#05060f" />
          </svg>
          <span>Fri 9:41 PM</span>
          <svg width="30" height="44" viewBox="0 0 30 44">
            <circle cx="11.500" cy="20" r="10" fill="none" stroke="#05060f" strokeWidth="2.600" />
            <path d="M18.500 27L28 35.500" stroke="#05060f" strokeWidth="3.400" />
          </svg>
          <svg width="32" height="44" viewBox="0 0 32 44">
            <circle cx="16" cy="22" r="16" fill="#0a0a20" />
            <g transform="translate(16 22) scale(.4)"><SiriOrb /></g>
          </svg>
          <svg width="38" height="44" viewBox="0 0 38 44">
            <path d="M1 14H4.500M8 14H37M1 22H4.500M8 22H31M1 30H4.500M8 30H37" stroke="#05060f" strokeWidth="3.800" />
          </svg>
        </Status>
      </MenuBar>

      <Window>
        <Toolbar>
          <Lights>
            <Light $fill="#ee6a5f" $edge="#dc5a4f" />
            <Light $fill="#f5bd4f" $edge="#e0a23c" />
            <Light $fill="#61c454" $edge="#50ad43" />
          </Lights>
          <ToolButton $w={50} $gap={2}>
            <svg width="14" height="26" viewBox="0 0 14 26"><path d="M12.500 1.500L2 13L12.500 24.500" fill="none" stroke="#474747" strokeWidth="2.800" /></svg>
          </ToolButton>
          <ToolButton $w={50} $gap={20}>
            <svg width="14" height="26" viewBox="0 0 14 26"><path d="M1.500 1.500L12 13L1.500 24.500" fill="none" stroke="#a9a9a9" strokeWidth="2.600" /></svg>
          </ToolButton>
          <ToolButton $w={75}>
            <svg width="30" height="24" viewBox="0 0 30 24">
              <path d="M1 1H29V23H1ZM11 1V23" fill="none" stroke="#4d4d4d" strokeWidth="2" />
              <path d="M4 5.500H8M4 9.500H8M4 13.500H8" stroke="#4d4d4d" strokeWidth="2" />
            </svg>
          </ToolButton>
          <Address>
            <Lock>
              <svg width="16" height="22" viewBox="0 0 16 22">
                <rect x="0" y="9" width="16" height="12" rx=".5" fill="#9b9b9b" />
                <path d="M3 10V6Q3 1.800 8 1.800T13 6V10" fill="none" stroke="#a0a0a0" strokeWidth="2" />
              </svg>
            </Lock>
            <Host>coursera.org</Host>
            <svg width="24" height="28" viewBox="0 0 24 28">
              <path d="M11 5A10.500 10.500 0 1 0 22 15" fill="none" stroke="#7b7b7b" strokeWidth="2.200" />
              <path d="M10.500 0L19.500 5L10.500 10.500Z" fill="#7b7b7b" />
            </svg>
          </Address>
          <ToolButton $w={75} $gap={15}>
            <svg width="24" height="32" viewBox="0 0 24 32">
              <path d="M9 11.500H1.500V30H22.500V11.500H15" fill="none" stroke="#4a4a4a" strokeWidth="2" />
              <path d="M12 21V3M6 9L12 2.500L18 9" fill="none" stroke="#4a4a4a" strokeWidth="2" />
            </svg>
          </ToolButton>
          <ToolButton $w={75}>
            <svg width="26" height="26" viewBox="0 0 26 26">
              <rect x="1.500" y="7.500" width="17" height="17" rx="1.500" fill="none" stroke="#4a4a4a" strokeWidth="2" />
              <path d="M7.500 5V3Q7.500 1.500 9 1.500H23Q24.500 1.500 24.500 3V17Q24.500 18.500 23 18.500H21" fill="none" stroke="#4a4a4a" strokeWidth="2" />
            </svg>
          </ToolButton>
        </Toolbar>
        <Tabs>
          {tabs.map((t, i) => (
            <Tab key={i} $active={i === 1}>{t}</Tab>
          ))}
          <NewTab>
            <svg width="22" height="22" viewBox="0 0 22 22"><path d="M11 0V22M0 11H22" stroke="#555" strokeWidth="2" /></svg>
          </NewTab>
        </Tabs>

        <PageHeader>
          <BackArrow>
            <svg width="41" height="40" viewBox="0 0 41 40">
              <path d="M20 .500L1.500 20L20 39.500M1.500 20H40" fill="none" stroke="#3f3f46" strokeWidth="2.200" />
            </svg>
          </BackArrow>
          <Heading>
            <Title>Practice quiz on Problem Solving</Title>
            <Subtitle>Practice Quiz • 25 min</Subtitle>
          </Heading>
        </PageHeader>

        <Page>
          <Question>
            <Number>4.</Number>
            <div>
              <Prompt>
                I have two coins. One is fair, and has a probability of coming up heads of .5. The second is<br />
                bent, and has a probability of coming up heads of <Inline>.75</Inline>. If I toss each coin once, what is the<br />
                probability that <Emphasis>at least</Emphasis> one of the coins will come up heads?
              </Prompt>
              <Options>
                <Option><Radio $color={GREY} />.625</Option>
                <Option><Radio $color={GREY} />.375</Option>
                <Option><Radio $color={GREY} /><Inline>1.0</Inline></Option>
                <Option $dark><Radio $color={BLUE} $on />.875</Option>
              </Options>
              <Feedback>
                <Check>
                  <svg width="36" height="27" viewBox="0 0 36 27">
                    <path d="M1.500 13.500L12 24.500L34.500 1.500" fill="none" stroke="#3f8558" strokeWidth="3.800" />
                  </svg>
                </Check>
                <div>
                  <Verdict>Correct</Verdict>
                  <Step>We apply the rule p(A or B or both)</Step>
                  <Step>= 1 - (p(~A)p(~B))</Step>
                  <Step>= 1 - ((1- .5)(1-.75))</Step>
                  <Step $last>= 1 - .125</Step>
                  <Result>=.875</Result>
                </div>
              </Feedback>
            </div>
            <Points>1 / 1 point</Points>
          </Question>

          <Question>
            <Number>5.</Number>
            <div>
              <FractionPrompt>
                <span>What is</span>
                <Fraction>
                  <span>11!</span>
                  <FractionRule />
                  <span>9!</span>
                </Fraction>
                <OptionMath>?</OptionMath>
              </FractionPrompt>
              <Options>
                <Option><Radio $color={GREY} $on /><OptionMath>110</OptionMath></Option>
                <Option><Radio $color={GREY} /><OptionMath>4, 435, 200</OptionMath></Option>
                <Option><Radio $color={GREY} /><OptionMath>554, 400</OptionMath></Option>
              </Options>
            </div>
            <Points>1 / 1 point</Points>
          </Question>
        </Page>
        <DockShade />
        <Scrollbar />
      </Window>

      <Dock>
        {appIcons.map((i) => <DockIcon key={i.name} icon={i} />)}
        <Divider $w={46} $top={32} $h={64} $x={24} />
        {utilityIcons.map((i) => <DockIcon key={i.name} icon={i} />)}
        <Divider $w={47.700} $top={16} $h={96} $x={24} />
        {placeIcons.map((i) => <DockIcon key={i.name} icon={i} />)}
      </Dock>
    </Desktop>
  );
}
